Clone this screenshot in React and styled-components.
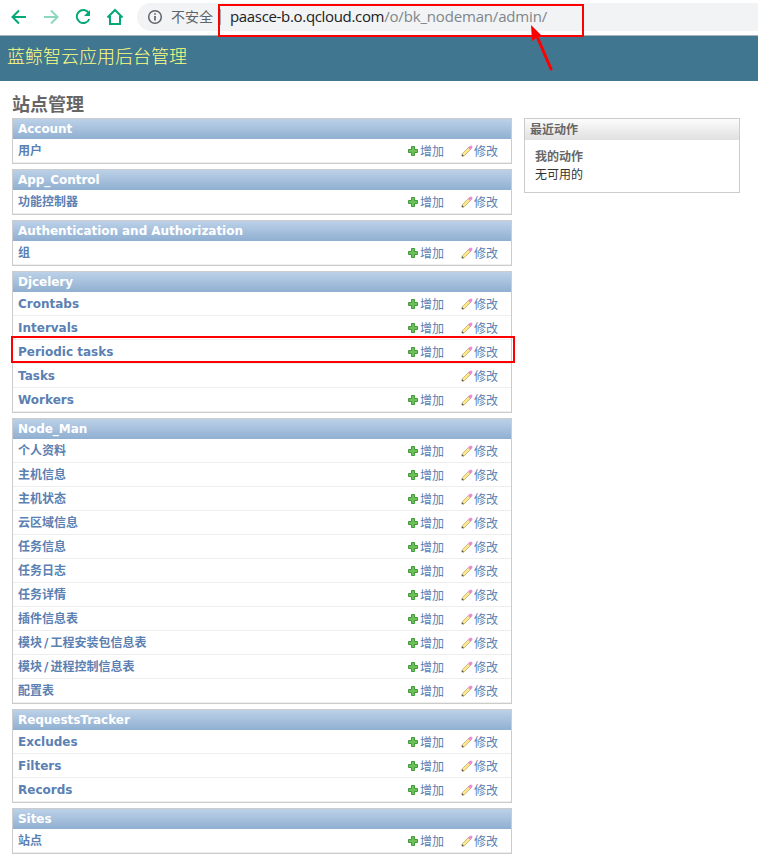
import React from "react";
import styled, { createGlobalStyle } from "styled-components";

const Global = createGlobalStyle`
  body { margin: 0; background: #fff; overflow: hidden; font: 12px/15px "DejaVu Sans", "Noto Sans CJK SC", sans-serif; color: #333; }
  h1, h2, h3, p { margin: 0; }
  * { box-sizing: border-box; }
`;
const Page = styled.div`position: relative; width: 758px; height: 858px; overflow: hidden;`;
const Toolbar = styled.nav`display: flex; height: 36px; border-bottom: 1px solid #a9b4b9; padding-top: 3px;`;
const NavIcons = styled.div`
  width: 137px; display: flex; padding: 2px 0 0 7px; gap: 8px;
  svg { display: block; width: 24px; height: 24px; fill: none; stroke: #04a777; stroke-width: 2; }
`;
const Address = styled.div`
  flex: 1; height: 28px; border-radius: 14px 0 0 14px; background: #f1f3f4; display: flex; align-items: center; white-space: nowrap;
  font: 15px/20px "Open Sans", "Noto Sans CJK SC", sans-serif; color: #5f6368;
  svg { margin: 0 8px 0 10px; }
`;
const Secure = styled.span`font-size: 14px; width: 49px;`;
const Divider = styled.span`width: 1px; height: 16px; background: #a5a8ab; margin-right: 9px;`;
const Url = styled.span`
  color: #80868b; letter-spacing: -0.17px; padding-bottom: 2px;
  b { font-weight: 400; color: #202124; letter-spacing: -0.33px; }
`;
const Header = styled.header`
  height: 45px; background: #417690; color: #ffff80; padding: 6px 7px;
  h1 { font: 300 18px/26px "Noto Sans CJK SC", sans-serif; }
`;
const Main = styled.main`padding: 10px 18px 0 12px;`;
const Title = styled.h1`font: bold 18px/24px "Noto Sans CJK SC", sans-serif; color: #666; margin-bottom: 3px;`;
const Columns = styled.div`display: flex; align-items: flex-start; justify-content: space-between;`;
const Apps = styled.div`width: 500px;`;
const Module = styled.section`border: 1px solid #ccc; margin-bottom: 5px;`;
const Caption = styled.h2`
  height: 20px; padding-left: 5px; color: #fff; font: bold 12px/20px "DejaVu Sans", sans-serif; letter-spacing: -0.04px;
  background: linear-gradient(#bcd1e8, #90afd1);
`;
const Row = styled.div`
  height: 24px; border-bottom: 1px solid #eee; display: flex; align-items: center; color: #5b80b2; padding-left: 5px;
`;
const Name = styled.a`flex: 1; font: bold 12px/22px "DejaVu Sans", "Noto Sans CJK SC", sans-serif;`;
const Slash = styled.span`margin: 0 2px;`;
const Action = styled.a`
  width: 54px; display: flex; align-items: center; font: 12px/22px "Noto Sans CJK SC", sans-serif;
  svg { width: 12px; height: 12px; margin-right: 1px; }
  &:last-child { width: 50px; }
`;
const Recent = styled.aside`width: 216px; height: 75px; border: 1px solid #ccc; color: #333;`;
const RecentHead = styled.h2`
  height: 21px; padding-left: 5px; color: #666; font: bold 12px/20px "Noto Sans CJK SC", sans-serif; background: linear-gradient(#fcfcfc, #e0e0e0);
`;
const RecentBody = styled.div`
  padding: 7px 10px; font: 12px/18px "Noto Sans CJK SC", sans-serif;
  h3 { font: bold 12px/18px "Noto Sans CJK SC", sans-serif; color: #666; }
`;
const Outline = styled.div`
  position: absolute; border: 2px solid #f00;
  left: ${(p) => p.$x}px; top: ${(p) => p.$y}px; width: ${(p) => p.$w}px; height: ${(p) => p.$h}px;
`;
const Arrow = styled.svg`position: absolute; left: 525px; top: 20px;`;

const Plus = () => (
  <svg viewBox="0 0 12 12">
    <path d="M4.500 1.500h3v3h3v3h-3v3h-3v-3h-3v-3h3z" fill="#6dbf5a" stroke="#3f9a3a" />
  </svg>
);
const Pencil = () => (
  <svg viewBox="0 0 12 12">
    <path d="M1.500 8.500 7.500 2.500l2 2-6 6-2.500.5z" fill="#fbe98c" stroke="#b9a25c" strokeWidth=".7" />
    <path d="M7.300 2.700 9 1l2 .2V3L9.300 4.700z" fill="#f08cd8" stroke="#dc86c8" strokeWidth=".6" />
    <path d="M.8 11.200V9l2.200 2.200z" fill="#444" />
  </svg>
);

const modules = [
  ["Account", ["用户"]],
  ["App_Control", ["功能控制器"]],
  ["Authentication and Authorization", ["组"]],
  ["Djcelery", ["Crontabs", "Intervals", "Periodic tasks", "Tasks", "Workers"]],
  ["Node_Man", ["个人资料", "主机信息", "主机状态", "云区域信息", "任务信息", "任务日志", "任务详情", "插件信息表", "模块/工程安装包信息表", "模块/进程控制信息表", "配置表"]],
  ["RequestsTracker", ["Excludes", "Filters", "Records"]],
  ["Sites", ["站点"]],
];

const label = (name) => {
  const [head, tail] = name.split("/");
  return tail ? <>{head}<Slash>/</Slash>{tail}</> : name;
};

export default function App() {
  return (
    <Page>
      <Global />
      <Toolbar>
        <NavIcons>
          <svg viewBox="0 0 24 24"><path d="M19 12H6M12 5.500 5.500 12 12 18.500" /></svg>
          <svg viewBox="0 0 24 24" opacity=".45"><path d="M5 12h13M12 5.500 18.500 12 12 18.500" /></svg>
          <svg viewBox="0 0 24 24"><path d="M17.700 8A6.500 6.500 0 1 0 18.300 14" /><path d="M19 5v6h-6z" fill="#04a777" stroke="none" /></svg>
          <svg viewBox="0 0 24 24"><path d="M4.500 12.500 12 5l7.500 7.500M7 11v8h10v-8" /></svg>
        </NavIcons>
        <Address>
          <svg width="16" height="16" viewBox="0 0 16 16" fill="none" stroke="#5f6368" strokeWidth="1.500"><circle cx="8" cy="8" r="6.300" /><path d="M8 7v4.500M8 4.200v1.600" strokeWidth="1.700" /></svg>
          <Secure>不安全</Secure>
          <Divider />
          <Url><b>paasce-b.o.qcloud.com</b>/o/bk_nodeman/admin/</Url>
        </Address>
      </Toolbar>
      <Header><h1>蓝鲸智云应用后台管理</h1></Header>
      <Main>
        <Title>站点管理</Title>
        <Columns>
          <Apps>
            {modules.map(([title, rows]) => (
              <Module key={title}>
                <Caption>{title}</Caption>
                {rows.map((name) => (
                  <Row key={name}>
                    <Name>{label(name)}</Name>
                    {name !== "Tasks" && <Action><Plus />增加</Action>}
                    <Action><Pencil />修改</Action>
                  </Row>
                ))}
              </Module>
            ))}
          </Apps>
          <Recent>
            <RecentHead>最近动作</RecentHead>
            <RecentBody><h3>我的动作</h3><p>无可用的</p></RecentBody>
          </Recent>
        </Columns>
      </Main>
      <Outline $x={218} $y={4} $w={366} $h={33} />
      <Outline $x={11} $y={336} $w={504} $h={27} />
      <Arrow width="32" height="56"><path d="M11 14 26 49" stroke="#f00" strokeWidth="3" strokeLinecap="round" /><path d="M6 5 16 15 7 21z" fill="#f00" /></Arrow>
    </Page>
  );
}
